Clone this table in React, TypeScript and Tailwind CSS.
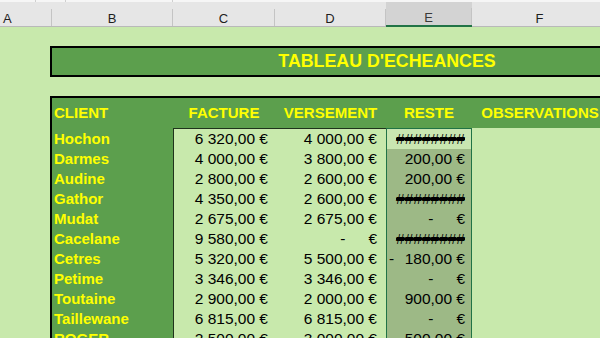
import React from 'react';

type Row = { name: string; c: string; d: string; e: string };

const rows: Row[] = [
  { name: 'Hochon', c: '6 320,00', d: '4 000,00', e: '#' },
  { name: 'Darmes', c: '4 000,00', d: '3 800,00', e: '200,00' },
  { name: 'Audine', c: '2 800,00', d: '2 600,00', e: '200,00' },
  { name: 'Gathor', c: '4 350,00', d: '2 600,00', e: '#' },
  { name: 'Mudat', c: '2 675,00', d: '2 675,00', e: '-' },
  { name: 'Cacelane', c: '9 580,00', d: '-', e: '#' },
  { name: 'Cetres', c: '5 320,00', d: '5 500,00', e: 'neg:180,00' },
  { name: 'Petime', c: '3 346,00', d: '3 346,00', e: '-' },
  { name: 'Toutaine', c: '2 900,00', d: '2 000,00', e: '900,00' },
  { name: 'Taillewane', c: '6 815,00', d: '6 815,00', e: '-' },
  { name: 'ROGER', c: '2 500,00', d: '3 000,00', e: '500,00' },
];

function Value({ v, pr }: { v: string; pr: string }) {
  if (v === '-') {
    return (
      <div className={`h-[20px] leading-[20px] flex justify-end ${pr}`}>
        <span>-</span>
        <span className="w-[23px]" />
        <span>€</span>
      </div>
    );
  }
  if (v === '#') {
    return (
      <div className={`h-[20px] leading-[20px] flex justify-end ${pr}`}>
        <span className="line-through decoration-[1.5px]">########</span>
      </div>
    );
  }
  if (v.startsWith('neg:')) {
    return (
      <div className={`h-[20px] leading-[20px] flex justify-between pl-[2px] ${pr}`}>
        <span>-</span>
        <span>{v.slice(4)} €</span>
      </div>
    );
  }
  return (
    <div className={`h-[20px] leading-[20px] flex justify-end whitespace-pre ${pr}`}>
      <span>{v} €</span>
    </div>
  );
}

function HeadCell({ label, w, selected, left }: { label: string; w: string; selected?: boolean; left?: boolean }) {
  return (
    <div
      className={`${w} h-full flex items-end shrink-0 ${
        selected ? 'bg-[#d3d3d3] border-b-2 border-[#217346]' : 'border-b border-[#b9b9b9]'
      }`}
    >
      <div
        className={`flex-1 h-full flex items-center pt-[9px] ${left ? 'justify-start pl-[3px]' : 'justify-center'} text-[13px] ${
          selected ? 'text-[#3a3a3a]' : 'text-[#1e1e1e]'
        }`}
      >
        {label}
      </div>
      <div className="w-px h-[17px] bg-[#c4c4c4] self-end" />
    </div>
  );
}

export default function App() {
  return (
    <div className="w-[600px] h-[338px] overflow-hidden bg-[#c8e9ac] font-['Liberation_Sans',Arial,sans-serif]">
      <div className="h-[2px] w-[600px] bg-[#f6f6f6] flex">
        <div className="w-[36px] border-r border-[#cfcfcf]" />
        <div className="w-[30px] border-r border-[#cfcfcf]" />
        <div className="w-[107px] border-r border-[#cfcfcf]" />
      </div>
      <div className="h-[25px] w-[800px] flex bg-[#e6e6e6]">
        <HeadCell label="A" w="w-[52px]" left />
        <HeadCell label="B" w="w-[121px]" />
        <HeadCell label="C" w="w-[102px]" />
        <HeadCell label="D" w="w-[111px]" />
        <HeadCell label="E" w="w-[86px]" selected />
        <HeadCell label="F" w="w-[136px]" />
        <div className="flex-1 border-b border-[#b9b9b9]" />
      </div>

      <div className="pl-[50px] pt-[19px] w-[900px]">
        <div className="w-[674px] h-[31px] border-2 border-black bg-[#5c9f4d] flex items-center justify-center text-[#ffff00] font-bold text-[17.8px]">
          TABLEAU D'ECHEANCES
        </div>

        <div className="mt-[19px] w-[558px] border-t-2 border-l-2 border-black">
          <div className="h-[30px] flex items-center bg-[#5c9f4d] text-[#ffff00] font-bold text-[15px] pt-[1px]">
            <div className="w-[121px] pl-[2px] shrink-0">CLIENT</div>
            <div className="w-[102px] text-center shrink-0">FACTURE</div>
            <div className="w-[111px] text-center shrink-0">VERSEMENT</div>
            <div className="w-[86px] text-center shrink-0">RESTE</div>
            <div className="w-[136px] text-center shrink-0 whitespace-nowrap">OBSERVATIONS</div>
          </div>

          <div className="flex text-[15.5px] text-black">
            <div className="w-[121px] shrink-0 bg-[#5c9f4d] pt-[1px] text-[15px]">
              {rows.map((r) => (
                <div key={r.name} className="h-[20px] leading-[20px] pl-[2px] text-[#ffff00] font-bold">
                  {r.name}
                </div>
              ))}
            </div>
            <div className="w-[213px] shrink-0 flex border-l border-t border-[#1f331c]">
              <div className="w-[101px]">
                {rows.map((r) => (
                  <Value key={r.name} v={r.c} pr="pr-[7px]" />
                ))}
              </div>
              <div className="w-[111px]">
                {rows.map((r) => (
                  <Value key={r.name} v={r.d} pr="pr-[9px]" />
                ))}
              </div>
            </div>
            <div className="w-[86px] shrink-0 border-x border-t border-[#217346] bg-[#9db986]">
              {rows.map((r, i) => (
                <div key={r.name} className={i === 0 ? 'bg-[#c9e6b1]' : ''}>
                  <Value v={r.e} pr="pr-[6px]" />
                </div>
              ))}
            </div>
            <div className="w-[136px] shrink-0" />
          </div>
        </div>
      </div>
    </div>
  );
}
